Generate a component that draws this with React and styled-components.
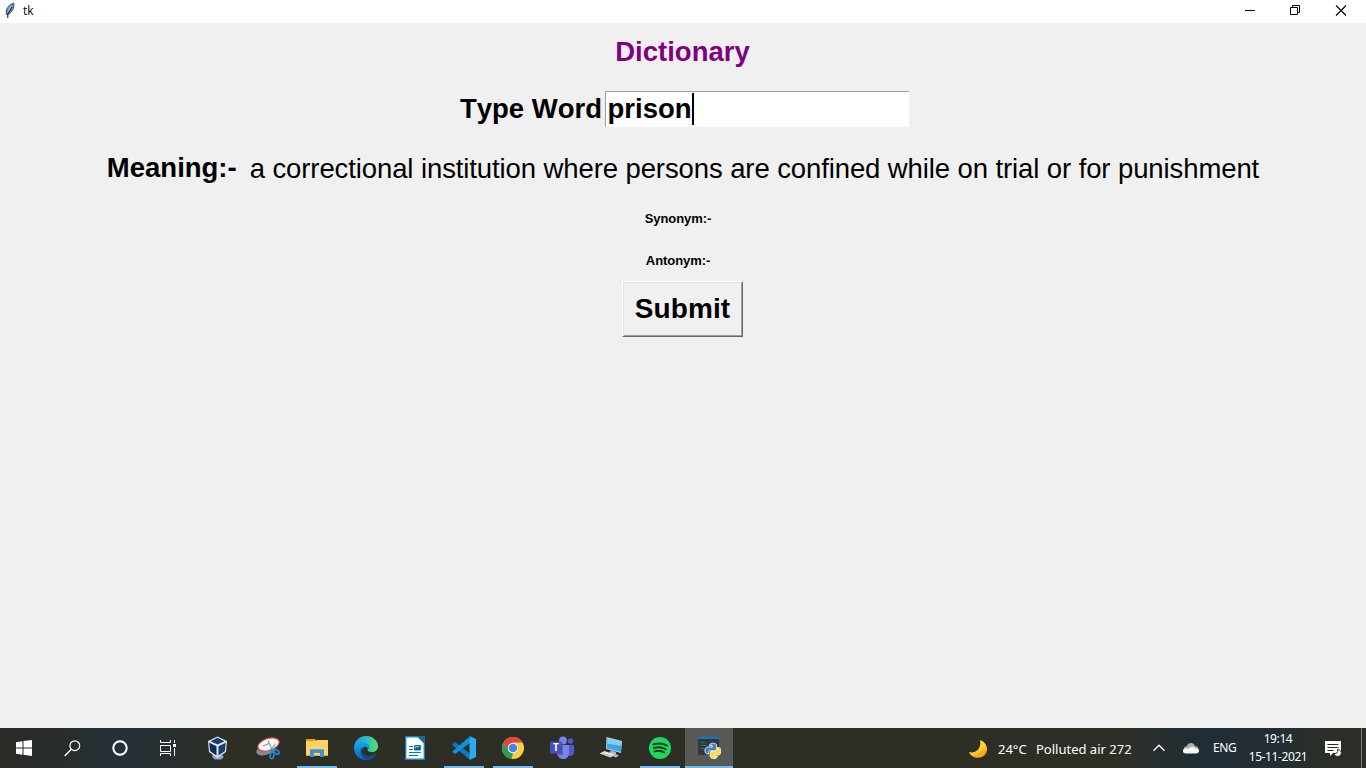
import React from 'react';
import styled, { createGlobalStyle } from 'styled-components';

const GlobalStyle = createGlobalStyle`
  * { box-sizing: border-box; }
  body { margin: 0; overflow: hidden; background: #f0f0f0; font-kerning: none; }
  svg { display: block; flex: none; }
`;

const Screen = styled.div`
  width: 1366px;
  height: 768px;
  display: flex;
  flex-direction: column;
  background: #f0f0f0;
  font-family: "Liberation Sans", Arial, sans-serif;
  color: #000;
`;

const TitleBar = styled.header`
  height: 23px;
  flex: none;
  display: flex;
  justify-content: space-between;
  background: #fff;
`;

const AppName = styled.div`
  display: flex;
  align-items: center;
  gap: 7px;
  padding: 0 0 1px 4px;
  font: 12px/22px "Open Sans", sans-serif;
`;

const WindowControls = styled.div`
  display: flex;
  padding-right: 2px;
`;

const WindowControl = styled.div`
  width: 45.5px;
  padding-top: 4px;
  display: flex;
  justify-content: center;
`;

const Form = styled.main`
  flex: 1;
  display: flex;
  flex-direction: column;
  align-items: center;
`;

const Heading = styled.h1`
  margin: 13px 1px 0 0;
  font-size: 27.5px;
  line-height: 32px;
  color: purple;
`;

const WordRow = styled.div`
  display: flex;
  align-items: center;
  margin-top: 23px;
  padding-left: 3px;
  height: 36px;
`;

const Label = styled.label`
  padding-bottom: 2px;
  font-size: 27.5px;
  font-weight: bold;
  line-height: 29px;
`;

const Entry = styled.div`
  width: 304px;
  height: 36px;
  margin-left: 3px;
  display: flex;
  align-items: center;
  padding: 0 0 1px 1.5px;
  background: #fff;
  border-top: 1px solid #a0a0a0;
  border-left: 1px solid #a0a0a0;
  font-size: 27.5px;
  font-weight: bold;
  line-height: 29px;
`;

const EntryText = styled.span`
  padding-bottom: 2px;
`;

const Caret = styled.span`
  width: 2px;
  height: 32px;
  background: #000;
`;

const MeaningRow = styled.div`
  display: flex;
  margin-top: 26px;
  gap: 13px;
  height: 31px;
`;

const MeaningText = styled.span`
  font-size: 27.5px;
  line-height: 29px;
  padding-top: 1px;
  white-space: nowrap;
  letter-spacing: -0.1px;
`;

const SmallLabel = styled.div`
  margin-top: ${(p) => p.$top};
  padding-right: 10px;
  font-size: 13px;
  font-weight: bold;
  line-height: 16px;
  letter-spacing: -0.08px;
`;

const SubmitButton = styled.button`
  width: 121px;
  height: 56px;
  margin: 12px 2px 0 0;
  padding: 0 0 2px 1px;
  background: #f0f0f0;
  border: 1px solid;
  border-color: #fff #696969 #696969 #fff;
  box-shadow: inset 1px 1px #e3e3e3, inset -1px -1px #a0a0a0;
  font: bold 28px/31px "Liberation Sans", Arial, sans-serif;
  letter-spacing: 0.1px;
  color: #000;
`;

const Taskbar = styled.footer`
  height: 40px;
  flex: none;
  display: flex;
  justify-content: space-between;
  color: #fff;
  background: linear-gradient(90deg, #292b26 0, #282d29 60px, #24303a 125px, #282e2b 180px, #2d2f27 230px, #2d2f27 1120px, #202d35 1200px, #222d32 1270px, #2b2e27 1330px);
  font-family: "Noto Sans", "Open Sans", sans-serif;
`;

const TaskGroup = styled.div`
  display: flex;
`;

const SystemButton = styled.div`
  width: 48px;
  height: 40px;
  display: flex;
  align-items: center;
  justify-content: center;
`;

const AppList = styled.div`
  display: flex;
  gap: 1px;
  margin-left: 3px;
`;

const AppTile = styled.div`
  width: 48px;
  height: 40px;
  display: flex;
  align-items: center;
  justify-content: center;
  background-color: ${(p) => (p.$active ? '#565954' : 'transparent')};
  background-image: ${(p) => (p.$running ? 'linear-gradient(#76b9ed, #76b9ed)' : 'none')};
  background-repeat: no-repeat;
  background-position: center bottom;
  background-size: ${(p) => (p.$active ? '48px' : '40px')} 2px;
`;

const Tray = styled.div`
  display: flex;
  align-items: center;
  height: 40px;
`;

const Weather = styled.div`
  display: flex;
  align-items: center;
  font-size: 13px;
  line-height: 18px;
  padding-top: 1px;
  margin-right: 20px;
`;

const Temperature = styled.span`
  width: 28px;
  margin-left: 11px;
  margin-right: 10px;
  white-space: nowrap;
`;

const Condition = styled.span`
  width: 97px;
  white-space: nowrap;
`;

const TrayIcons = styled.div`
  display: flex;
  align-items: center;
  gap: 18px;
`;

const Language = styled.span`
  width: 24px;
  margin: -1px 0 0 14px;
  font-size: 12px;
  letter-spacing: -0.4px;
`;

const Clock = styled.div`
  width: 60px;
  margin: 0 17px 0 11px;
  font-size: 12px;
  line-height: 18px;
  letter-spacing: -0.4px;
  text-align: center;
  white-space: nowrap;
`;

const DesktopEdge = styled.div`
  width: 5px;
  height: 40px;
  margin-left: 19px;
  border-left: 1px solid #777a74;
`;

const Feather = () => (
  <svg width="12" height="18" viewBox="0 0 12 18">
    <path d="M2.500 12.500C1.200 8 4 2.500 9.800 1.200c.6 4-1.300 9-5.800 11.300z" fill="#5a92d6" stroke="#3a4658" strokeWidth=".9" />
    <path d="M3.800 16V12L8 5" fill="none" stroke="#111" strokeWidth="1" />
    <path d="M4 9.500L7.500 3.500" stroke="#b5d5f5" strokeWidth="1" />
  </svg>
);

const Minimize = () => (
  <svg width="12" height="13"><path d="M1 6.500h10" stroke="#000" /></svg>
);
const Restore = () => (
  <svg width="13" height="13"><path d="M1.500 3.500h7v7h-7zM3.500 3.500v-2h7v7h-2" fill="none" stroke="#000" /></svg>
);
const Close = () => (
  <svg width="12" height="13"><path d="M1 1.500l10 10M11 1.500l-10 10" stroke="#000" strokeWidth="1.100" /></svg>
);

const StartIcon = () => (
  <svg width="16" height="16" viewBox="0 0 16 16"><path d="M0 2.200l6.500-.9v6.200H0zM7.500 1.100L16 0v7.500H7.500zM0 8.500h6.500v6.200L0 13.800zM7.500 8.500H16V16l-8.500-1.200z" fill="#fff" /></svg>
);
const SearchIcon = () => (
  <svg width="17" height="17" viewBox="0 0 17 17"><circle cx="10.800" cy="5.700" r="4.900" fill="none" stroke="#fff" strokeWidth="1.200" /><path d="M7.300 9.300L.7 16" stroke="#fff" strokeWidth="1.300" /></svg>
);
const CortanaIcon = () => (
  <svg width="16" height="16"><circle cx="8" cy="8" r="6.700" fill="none" stroke="#fff" strokeWidth="2" /></svg>
);
const TaskViewIcon = () => (
  <svg width="16" height="16"><path d="M.5 0v2.500h10V0M.5 16v-2.500h10V16M.5 5.500h10v6h-10zM14.500 0v3M14.500 8v8" fill="none" stroke="#fff" /><path d="M13 4h3v3h-3z" fill="#fff" /></svg>
);

const BoxIcon = () => (
  <svg width="26" height="24" viewBox="0 0 26 24">
    <path d="M7 18h8l3 3-3 2.500H9L6 21z" fill="#8fa3c4" />
    <path d="M2 5l9.500-4.500L21 5l-1 11-8.500 6L3 16z" fill="#dce5ef" />
    <path d="M4.500 5.200l7-3.500 7 3.500-7 3.200z" fill="#173d6b" />
    <path d="M3.200 6.800l7.300 3.500v9.300L4.200 15.300z" fill="#0c2a55" />
    <path d="M19.800 6.800l-7.300 3.500v9.300l6.300-4.300z" fill="#163f70" />
  </svg>
);
const SnipIcon = () => (
  <svg width="24" height="24" viewBox="0 0 24 24">
    <ellipse cx="9.500" cy="14" rx="9.500" ry="5" transform="rotate(-16 9.500 14)" fill="#85898b" />
    <ellipse cx="12.500" cy="8.500" rx="11" ry="6" transform="rotate(-18 12.500 8.500)" fill="#f7f8f8" stroke="#d94748" strokeWidth="1.200" />
    <path d="M7 10l6-2.500M12 4.500l4.500 10M19.500 7.500L14 15" stroke="#8c9498" strokeWidth="1.100" />
    <ellipse cx="20.500" cy="16" rx="2.800" ry="1.900" transform="rotate(35 20.500 16)" fill="none" stroke="#188bd0" strokeWidth="1.700" />
    <ellipse cx="16" cy="19.500" rx="1.800" ry="3.100" transform="rotate(15 16 19.500)" fill="none" stroke="#188bd0" strokeWidth="1.700" />
    <path d="M13.500 14.300l5 .7" stroke="#188bd0" strokeWidth="2" />
  </svg>
);
const FolderIcon = () => (
  <svg width="22" height="20" viewBox="0 0 22 20">
    <path d="M0 1h9l2 2H0z" fill="#e79c11" /><path d="M0 3h10l1-1h11v16H0z" fill="#ffd363" />
    <path d="M0 17.500h22" stroke="#e8ab30" />
    <path d="M4 19v-8h14v8h-4v-4H8v4z" fill="#3a93d7" /><path d="M4 11h14v1H4z" fill="#56a9e5" />
  </svg>
);
const EdgeIcon = () => (
  <svg width="24" height="24" viewBox="0 0 24 24">
    <defs>
      <linearGradient id="edgeTop"><stop offset="0" stopColor="#219ee1" /><stop offset=".5" stopColor="#26bbd0" /><stop offset="1" stopColor="#5ce256" /></linearGradient>
      <linearGradient id="edgeBody" x2="0" y2="1"><stop offset="0" stopColor="#16a7e4" /><stop offset="1" stopColor="#0b63bb" /></linearGradient>
    </defs>
    <path d="M0 11C1 4 6 0 12 0c7 0 12 5 12 10 0 4-3 6-6 6-4 0-5-2-4-3 2-2 0-6-5-6C5 7 2 9 0 11z" fill="url(#edgeTop)" />
    <path d="M0 12c0-4 4-6 8-6 5 0 8 4 6 7-2-4-6-2-6 2 0 5 7 7 14 3-2 4-6 6-10 6C5 24 0 19 0 12z" fill="url(#edgeBody)" />
    <path d="M8 11c-4 5 0 12 6 13 4-1 7-3 8-6-7 4-14 2-14-3z" fill="#114d91" />
  </svg>
);
const WriterIcon = () => (
  <svg width="20" height="24" viewBox="0 0 20 24">
    <path d="M.7.7H13L19.300 7v16.300H.7z" fill="#fff" stroke="#1583bd" strokeWidth="1.400" />
    <path d="M13 0h7v7z" fill="#176895" />
    <path d="M4 10.500h4M4 13.500h4M4 16.500h12M4 19.500h9" stroke="#087ab5" strokeWidth="1.200" />
    <path d="M9.500 9.500h6v4.500h-6z" fill="#63b2d6" stroke="#087ab5" /><path d="M10 13l2-2 1 1 2-2v4h-5z" fill="#125b89" />
  </svg>
);
const CodeIcon = () => (
  <svg width="24" height="24" viewBox="0 0 24 24">
    <path d="M.3 8.200L3 6l15.500 12v5.500L17 23 .3 9z" fill="#1178bd" />
    <path d="M.3 15.500L17 1l1.500 5.500L3 18l-2.700-2z" fill="#0798dc" />
    <path d="M17.500 0L24 3v18l-6.500 3z" fill="#2aaaf0" />
  </svg>
);
const ChromeIcon = () => (
  <svg width="22" height="22" viewBox="0 0 22 22">
    <circle cx="11" cy="11" r="11" fill="#ffcd40" />
    <path d="M1.500 5.500A11 11 0 0120.500 5.500H11L6 14z" fill="#e44335" />
    <path d="M1.500 5.500L6.200 13.800 11 16.500 9.500 21.900A11 11 0 011.500 5.500z" fill="#2f9b57" />
    <circle cx="11" cy="11" r="5.200" fill="#f5f5f5" /><circle cx="11" cy="11" r="4.200" fill="#4285f4" />
  </svg>
);
const TeamsLetter = styled.text`
  font: bold 10px "Open Sans", sans-serif;
  fill: #fff;
`;
const TeamsIcon = () => (
  <svg width="24" height="24" viewBox="0 0 24 24">
    <circle cx="13" cy="4.500" r="3.900" fill="#7b83eb" /><circle cx="20.500" cy="5" r="2.700" fill="#5059c9" />
    <path d="M17 9h7v7c0 4-4 5-7 3z" fill="#5059c9" /><path d="M7 9h12v8c0 8-11 8-12 0z" fill="#7b83eb" />
    <path d="M7 9h6v10H7z" fill="#5962bd" /><rect y="5.500" width="12" height="12" rx="1" fill="#464eb8" />
    <TeamsLetter x="3.100" y="15.100">T</TeamsLetter>
  </svg>
);
const ComputerIcon = () => (
  <svg width="24" height="24" viewBox="0 0 24 24">
    <path d="M7.500 1L23 5l-1 12-15-4z" fill="#cbd3d8" /><path d="M8.300 2.200L22 6v10L7.800 12.200z" fill="#35a7eb" /><path d="M8.300 2.200L22 6v4L8.200 7.500z" fill="#7dcef8" />
    <path d="M12 14.500l5 1.500v2l3 1.500-3 2-8-3z" fill="#aeb7bb" /><path d="M.5 17.500l5-2.500 10 3.500-4 3z" fill="#e2e6e6" /><path d="M3 17.500l9 2.500" stroke="#92999b" strokeWidth=".6" />
  </svg>
);
const SpotifyIcon = () => (
  <svg width="22" height="22" viewBox="0 0 22 22"><circle cx="11" cy="11" r="11" fill="#1ed760" /><path d="M4.300 7.400c5-1.600 10-1 13.800 1.200M4.900 11c4.300-1.300 8.400-.7 11.800 1.300M5.500 14.300c3.500-1 7-.6 9.700 1.200" fill="none" stroke="#153b20" strokeWidth="1.900" strokeLinecap="round" /></svg>
);
const PythonIcon = () => (
  <svg width="24" height="24" viewBox="0 0 24 24">
    <path d="M1 1h21v18H1z" fill="#303a3d" /><path d="M1 1h21v2H1z" fill="#087bd0" />
    <path d="M4 6.500h4M4 9.500h5M4 12.500h3" stroke="#3f7040" />
    <g transform="translate(1.500 -.5)">
      <path d="M11 9.500c0-2.500 7-2.500 7 0v4c0 2-1 2-3 2h-3c-2 0-2 1-2 3H9c-3.500 0-3.500-7 0-7h5v-1h-3z" fill="#4286b7" stroke="#f3f6f7" strokeWidth=".8" />
      <path d="M18.500 12H20c3.500 0 3.500 7.500 0 7.500h-4v1h3c0 3.500-7.500 3.500-7.500 0v-3c0-2 1-2 3-2h2c2 0 2-1 2-3.500z" fill="#ffda50" stroke="#f3f6f7" strokeWidth=".8" />
      <circle cx="12.700" cy="9.700" r=".6" fill="#fff" /><circle cx="17" cy="21.500" r=".6" fill="#fff" />
    </g>
  </svg>
);
const MoonIcon = () => (
  <svg width="18" height="18" viewBox="0 0 18 18"><defs><linearGradient id="moon" x2=".6" y2="1"><stop stopColor="#ffe451" /><stop offset=".6" stopColor="#ffd32c" /><stop offset="1" stopColor="#f29c18" /></linearGradient></defs><path d="M11 0c9 3 9 14 2 17C8 19 2 17 0 12c7 2 13-4 11-12z" fill="url(#moon)" /></svg>
);
const ChevronIcon = () => (
  <svg width="12" height="8"><path d="M.5 6.800L6 1.200l5.500 5.600" fill="none" stroke="#fff" strokeWidth="1.300" /></svg>
);
const CloudIcon = () => (
  <svg width="16" height="11" viewBox="0 0 16 11"><path d="M1 7c-1-3 2-4 3-4 1-4 7-4 8 0 3 0 4 3 3 5z" fill="#acafb0" /><path d="M3 10.500C-1 10.500-1 6 2 5.500c3-.5 3 1 5-1 3-2 5 0 5 1 3-.6 4 1 4 2.500s-1 2.500-3 2.500z" fill="#f4f4f4" /></svg>
);
const NotificationsIcon = () => (
  <svg width="17" height="17" viewBox="0 0 17 17">
    <path d="M0 1h16v12H8l-3 3v-3H0z" fill="#fff" /><path d="M2.500 4.500h11M2.500 7.500h11M2.500 10.500h6" stroke="#292e2c" />
    <path d="M12.500 9.500c.8 3-1 4.300-3.500 4.300 1 3.200 6 3.500 7.200.3.700-2-.8-4.500-3.700-4.600z" fill="#fff" stroke="#292e2c" strokeWidth="1" />
  </svg>
);

const controls = [Minimize, Restore, Close];
const systemIcons = [StartIcon, SearchIcon, CortanaIcon, TaskViewIcon];
const apps = [
  { Icon: BoxIcon }, { Icon: SnipIcon }, { Icon: FolderIcon, running: true },
  { Icon: EdgeIcon }, { Icon: WriterIcon }, { Icon: CodeIcon, running: true },
  { Icon: ChromeIcon, running: true }, { Icon: TeamsIcon }, { Icon: ComputerIcon },
  { Icon: SpotifyIcon, running: true }, { Icon: PythonIcon, running: true, active: true },
];

export default function App() {
  return (
    <Screen>
      <GlobalStyle />
      <TitleBar>
        <AppName><Feather />tk</AppName>
        <WindowControls>
          {controls.map((Icon, i) => <WindowControl key={i}><Icon /></WindowControl>)}
        </WindowControls>
      </TitleBar>
      <Form>
        <Heading>Dictionary</Heading>
        <WordRow>
          <Label>Type Word</Label>
          <Entry><EntryText>prison</EntryText><Caret /></Entry>
        </WordRow>
        <MeaningRow>
          <Label>Meaning:-</Label>
          <MeaningText>a correctional institution where persons are confined while on trial or for punishment</MeaningText>
        </MeaningRow>
        <SmallLabel $top="27px">Synonym:-</SmallLabel>
        <SmallLabel $top="26px">Antonym:-</SmallLabel>
        <SubmitButton>Submit</SubmitButton>
      </Form>
      <Taskbar>
        <TaskGroup>
          {systemIcons.map((Icon, i) => <SystemButton key={i}><Icon /></SystemButton>)}
          <AppList>
            {apps.map(({ Icon, running, active }, i) => (
              <AppTile key={i} $running={running} $active={active}><Icon /></AppTile>
            ))}
          </AppList>
        </TaskGroup>
        <Tray>
          <Weather><MoonIcon /><Temperature>24°C</Temperature><Condition>Polluted air 272</Condition></Weather>
          <TrayIcons><ChevronIcon /><CloudIcon /></TrayIcons>
          <Language>ENG</Language>
          <Clock>19:14<br />15-11-2021</Clock>
          <NotificationsIcon />
          <DesktopEdge />
        </Tray>
      </Taskbar>
    </Screen>
  );
}
